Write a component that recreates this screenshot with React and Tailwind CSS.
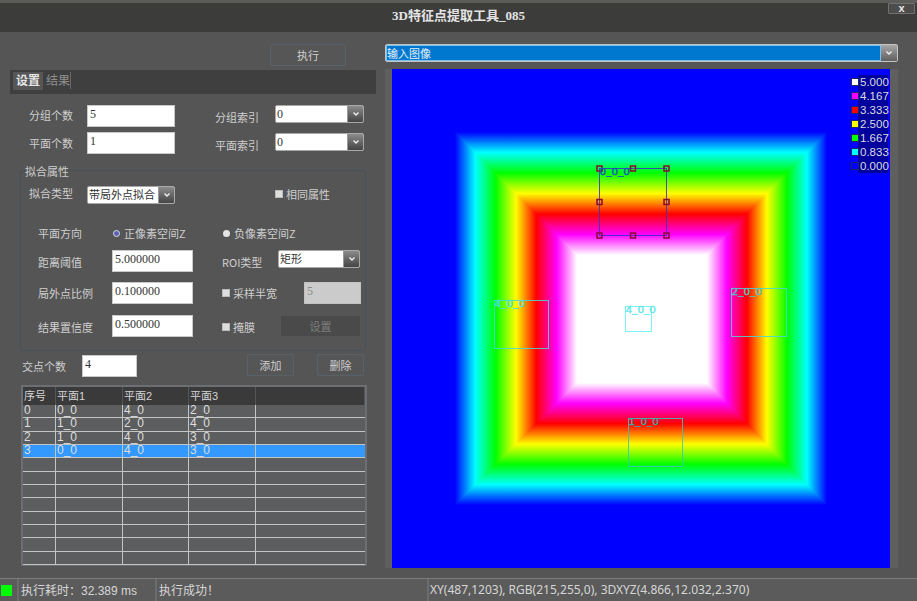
import React from "react";

const sans = "font-['Noto_Sans_CJK_SC','Liberation_Sans',sans-serif]";

function Chevron() {
  return (
    <svg width="8" height="6" viewBox="0 0 8 6" fill="none" stroke="#f0f0f0" strokeWidth="1.4">
      <path d="M1.5 1.5 L4 4 L6.5 1.5" />
    </svg>
  );
}

function Label({ w, top = 0, children }) {
  return (
    <span
      className="shrink-0 text-[11px] leading-[16px] text-[#cfcfcf] whitespace-nowrap"
      style={{ width: w, marginTop: top }}
    >
      {children}
    </span>
  );
}

function Input({ w, value, h = 22, disabled = false }) {
  return (
    <div
      className={`shrink-0 border px-[2px] pt-[1px] text-[12px] leading-[14px] font-['Liberation_Serif',serif] ${
        disabled ? "bg-[#cbcbcb] border-[#c2c2c2] text-[#8a8a8a]" : "bg-white border-[#c9c9c9] text-[#333333]"
      }`}
      style={{ width: w, height: h }}
    >
      {value}
    </div>
  );
}

function Combo({ w, value, cjk = false }) {
  return (
    <div
      className="shrink-0 h-[18px] flex bg-white border border-[#a8a8a8] rounded-[2px]"
      style={{ width: w }}
    >
      <span
        className={`flex-1 pl-[1px] text-[#333333] whitespace-nowrap overflow-hidden ${
          cjk ? "text-[11px] leading-[15px]" : "text-[12px] leading-[17px] font-['Liberation_Serif',serif]"
        }`}
      >
        {value}
      </span>
      <span className="w-[16px] flex items-center justify-center bg-gradient-to-b from-[#8c8c8c] to-[#454545] border-l border-[#9a9a9a] rounded-r-[1px]">
        <Chevron />
      </span>
    </div>
  );
}

function Check({ children, w }) {
  return (
    <span className="shrink-0 flex items-center gap-[3px]" style={{ width: w }}>
      <span className="w-[8px] h-[8px] bg-[#dedede] border border-[#bbbbbb]" />
      <span className="text-[11px] leading-[16px] text-[#cfcfcf] whitespace-nowrap">{children}</span>
    </span>
  );
}

function Radio({ on, children }) {
  return (
    <span className="flex items-center gap-[4px]">
      <span
        className={`w-[7px] h-[7px] rounded-full ${on ? "bg-[#5a60b8] border border-[#dddddd]" : "bg-[#e4e4e4]"}`}
      />
      <span className="text-[11px] leading-[16px] text-[#cfcfcf] whitespace-nowrap">{children}</span>
    </span>
  );
}

function Btn({ w, h = 22, children, cls = "" }) {
  return (
    <div
      className={`shrink-0 flex items-center justify-center text-[11px] rounded-[1px] border border-[#596066] bg-[#565656] text-[#cfcfcf] ${cls}`}
      style={{ width: w, height: h }}
    >
      {children}
    </div>
  );
}

const rows = [
  ["0", "0_0", "4_0", "2_0"],
  ["1", "1_0", "2_0", "4_0"],
  ["2", "1_0", "4_0", "3_0"],
  ["3", "0_0", "4_0", "3_0"],
  ...Array.from({ length: 8 }, () => ["", "", "", ""]),
];

const cols = "grid grid-cols-[33px_67px_66px_67px_1fr]";

function Table() {
  return (
    <div className="ml-[21px] mt-[8px] w-[346px] h-[181px] border-2 border-b-[1px] border-[#6c6e72] bg-[#5c5d5f]">
      <div className={`${cols} h-[18px] bg-[#3a3a3a] text-[11px] leading-[18px] text-[#d4d4d4]`}>
        {["序号", "平面1", "平面2", "平面3", ""].map((t, i) => (
          <div key={i} className="pl-[1px] border-r border-[#555555] font-['Liberation_Sans','Noto_Sans_CJK_SC',sans-serif]">
            {t}
          </div>
        ))}
      </div>
      {rows.map((r, i) => (
        <div
          key={i}
          className={`${cols} h-[13.33px] border-b border-[#c4c4c4] text-[12px] leading-[10px] text-[#dddddd] font-['Liberation_Sans',sans-serif] ${
            i === 3 ? "bg-[#3399ff]" : ""
          }`}
        >
          {[...r, ""].map((t, j) => (
            <div key={j} className={`pl-[1px] ${j < 4 ? "border-r border-[#c4c4c4]" : ""}`}>
              {t}
            </div>
          ))}
        </div>
      ))}
    </div>
  );
}

const stops = [
  ["0%", "#0000ff"],
  ["16.67%", "#00ffff"],
  ["33.33%", "#00ff00"],
  ["50%", "#ffff00"],
  ["66.67%", "#ff0000"],
  ["83.33%", "#ff00ff"],
  ["100%", "#ffffff"],
];

function Grad({ id, x1, y1, x2, y2 }) {
  return (
    <linearGradient id={id} gradientUnits="userSpaceOnUse" x1={x1} y1={y1} x2={x2} y2={y2}>
      {stops.map(([o, c]) => (
        <stop key={o} offset={o} stopColor={c} />
      ))}
    </linearGradient>
  );
}

const OX = 392;
const OY = 69;

function Frame({ x, y, w, h, label, color, textColor, big }) {
  const px = x - OX + 0.5;
  const py = y - OY + 0.5;
  const handles = big
    ? [0, 0.5, 1].flatMap((a) => [0, 0.5, 1].filter((b) => !(a === 0.5 && b === 0.5)).map((b) => [a, b]))
    : [];
  return (
    <g>
      <rect x={px} y={py} width={w} height={h} fill="none" stroke={color} strokeWidth="1" opacity="0.85" />
      {handles.map(([a, b], i) => (
        <rect
          key={i}
          x={px + a * w - 2.5}
          y={py + b * h - 2.5}
          width="5"
          height="5"
          fill="none"
          stroke="#8a0a30"
          strokeWidth="1.5"
        />
      ))}
      <text
        transform={`translate(${px} ${py + 6}) scale(1 0.8)`}
        fontSize="10.5"
        fontFamily="DejaVu Sans"
        fill={textColor}
        stroke={textColor}
        strokeWidth="0.4"
      >
        {label}
      </text>
    </g>
  );
}

function HeatMap() {
  return (
    <svg width="498" height="499" viewBox="0 0 498 499" className="block" shapeRendering="geometricPrecision">
      <defs>
        <Grad id="gt" x1="0" y1="63" x2="0" y2="186" />
        <Grad id="gb" x1="0" y1="436" x2="0" y2="314" />
        <Grad id="gl" x1="63" y1="0" x2="185" y2="0" />
        <Grad id="gr" x1="435" y1="0" x2="315" y2="0" />
      </defs>
      <rect width="498" height="499" fill="#0000ff" />
      <polygon points="63,63 435,63 315,186 185,186" fill="url(#gt)" shapeRendering="crispEdges" />
      <polygon points="63,436 435,436 315,314 185,314" fill="url(#gb)" shapeRendering="crispEdges" />
      <polygon points="63,63 185,186 185,314 63,436" fill="url(#gl)" shapeRendering="crispEdges" />
      <polygon points="435,63 315,186 315,314 435,436" fill="url(#gr)" shapeRendering="crispEdges" />
      <rect x="185" y="186" width="130" height="128" fill="#ffffff" />
      <Frame x={599} y={168} w={67} h={67} label="0_0_0" color="#3a30c8" textColor="#1850c8" big />
      <Frame x={494} y={300} w={54} h={48} label="4_0_0" color="#48d8d8" textColor="#48e0e0" />
      <Frame x={731} y={288} w={55} h={48} label="2_0_0" color="#48d8d8" textColor="#48c8c8" />
      <Frame x={625} y={306} w={26} h={25} label="4_0_0" color="#60f0f0" textColor="#60e8e8" />
      <Frame x={628} y={418} w={54} h={48} label="1_0_0" color="#38c8b8" textColor="#38a8a8" />
    </svg>
  );
}

const legend = [
  ["5.000", "bg-[#ffffff]"],
  ["4.167", "bg-[#ff00ff]"],
  ["3.333", "bg-[#ff0000]"],
  ["2.500", "bg-[#ffff00]"],
  ["1.667", "bg-[#00ff00]"],
  ["0.833", "bg-[#00ffff]"],
  ["0.000", "bg-[#0000ff]"],
];

function Legend() {
  return (
    <div className="absolute left-[466px] top-[6px] flex flex-col">
      {legend.map(([t, c]) => (
        <div key={t} className="flex h-[14px] items-center">
          <span className={`relative z-10 -mr-[1px] w-[8px] h-[8px] border border-[#222266] ${c}`} />
          <span className="w-[30px] h-[14px] pl-[2px] bg-[#00009c] text-[#dcdcdc] text-[11.5px] leading-[14px] font-['Liberation_Sans',sans-serif]">
            {t}
          </span>
        </div>
      ))}
    </div>
  );
}

export default function App() {
  return (
    <div className={`relative w-[917px] h-[601px] flex flex-col bg-[#555555] overflow-hidden ${sans}`}>
      <header className="h-[32px] shrink-0 border-t-[3px] border-[#5c5c58] bg-[#3c3d3b] flex items-center justify-center pb-[3px]">
        <h1 className="text-[13px] font-bold text-[#e4e4e4] font-['Liberation_Serif','Noto_Sans_CJK_SC',serif]">
          3D特征点提取工具_085
        </h1>
      </header>
      <div className="absolute left-[888px] top-[3px] w-[27px] h-[11px] bg-[#4c4d4b] border border-[#707070] rounded-[1px] flex items-center justify-center text-[11px] leading-[9px] font-bold text-[#e8e8e8] font-['Liberation_Sans',sans-serif]">
        x
      </div>

      <main className="flex-1 flex min-h-0">
        <section className="w-[385px] shrink-0 flex flex-col">
          <Btn w={76} cls="ml-[270px] mt-[12px]">执行</Btn>

          <div className="ml-[10px] mt-[4px] w-[366px] h-[24px] bg-[#3f3f3f] flex items-start pl-[3px] pt-[2px]">
            <span className="w-[30px] h-[18px] bg-[#565656] text-center text-[12px] font-bold leading-[16px] text-[#e6e6e6]">设置</span>
            <span className="ml-[3px] w-[25px] h-[17px] border-r border-[#666666] text-[12px] leading-[16px] text-[#8f8f8f]">结果</span>
          </div>

          <div className="ml-[29px] mt-[11px] flex items-start">
            <Label w={58} top={2}>分组个数</Label>
            <Input w={88} value="5" />
            <span className="w-[40px]" />
            <Label w={60} top={4}>分组索引</Label>
            <Combo w={89} value="0" />
          </div>
          <div className="ml-[29px] mt-[5px] flex items-start">
            <Label w={58} top={3}>平面个数</Label>
            <Input w={88} value="1" />
            <span className="w-[40px]" />
            <Label w={60} top={5}>平面索引</Label>
            <div className="mt-[1px]">
              <Combo w={89} value="0" />
            </div>
          </div>

          <fieldset className="relative ml-[20px] mt-[16px] w-[346px] h-[181px] border border-[#465058] rounded-[4px] flex flex-col">
            <span className="absolute left-[4px] -top-[8px] bg-[#555555] text-[11px] leading-[16px] text-[#cfcfcf]">拟合属性</span>

            <div className="flex items-start ml-[8px] mt-[15px]">
              <Label w={58} top={-1}>拟合类型</Label>
              <Combo w={88} value="带局外点拟合" cjk />
              <span className="w-[100px]" />
              <Check>相同属性</Check>
            </div>

            <div className="flex items-center ml-[17px] mt-[21px] h-[16px]">
              <Label w={75}>平面方向</Label>
              <span className="w-[110px]"><Radio on>正像素空间Z</Radio></span>
              <Radio>负像素空间Z</Radio>
            </div>

            <div className="flex items-start ml-[17px] mt-[9px]">
              <Label w={74} top={4}>距离阈值</Label>
              <Input w={81} value="5.000000" />
              <span className="w-[29px]" />
              <Label w={56} top={4}>ROI类型</Label>
              <Combo w={82} value="矩形" cjk />
            </div>

            <div className="flex items-start ml-[17px] mt-[10px]">
              <Label w={74} top={3}>局外点比例</Label>
              <Input w={81} value="0.100000" />
              <span className="w-[29px]" />
              <div className="mt-[3px]">
                <Check w={82}>采样半宽</Check>
              </div>
              <Input w={57} value="5" disabled />
            </div>

            <div className="flex items-start ml-[17px] mt-[11px]">
              <Label w={74} top={4}>结果置信度</Label>
              <Input w={81} value="0.500000" />
              <span className="w-[29px]" />
              <div className="mt-[4px]">
                <Check w={59}>掩膜</Check>
              </div>
              <div className="mt-[1px] w-[79px] h-[20px] bg-[#4a4a4a] flex items-center justify-center text-[11px] text-[#7e7e7e]">
                设置
              </div>
            </div>
          </fieldset>

          <div className="ml-[22px] mt-[4px] flex items-start">
            <Label w={60} top={3}>交点个数</Label>
            <Input w={55} value="4" />
            <span className="w-[110px]" />
            <div className="-mt-[1px] flex gap-[23px]">
              <Btn w={47}>添加</Btn>
              <Btn w={47}>删除</Btn>
            </div>
          </div>

          <Table />
        </section>

        <section className="w-[513px] shrink-0 flex flex-col">
          <div className="mt-[12px] h-[18px] flex border border-[#c4c4c4] rounded-[2px]">
            <span className="flex-1 bg-[#0078d0] border border-[#7cc0ee] text-[11px] leading-[14px] text-[#e8f2fa]">输入图像</span>
            <span className="w-[16px] flex items-center justify-center bg-gradient-to-b from-[#a8a8a8] to-[#606060]">
              <Chevron />
            </span>
          </div>
          <div className="relative mt-[7px] h-[499px] bg-[#5f5f5f] px-[7px]">
            <HeatMap />
            <Legend />
          </div>
        </section>
      </main>

      <footer className="h-[23px] shrink-0 border-t border-[#7c7c7c] bg-[#5b5b5b] flex items-center text-[12px] text-[#d6d6d6]">
        <span className="ml-[1px] w-[11px] h-[11px] bg-[#00ff00]" />
        <span className="ml-[5px] h-full w-[2px] bg-[#6c6c6c]" />
        <span className="w-[136px] pl-[2px] whitespace-nowrap">
          执行耗时：<span className="font-['Liberation_Sans',sans-serif]">32.389 ms</span>
        </span>
        <span className="h-full w-[2px] bg-[#6c6c6c]" />
        <span className="w-[270px] pl-[2px] whitespace-nowrap">执行成功！</span>
        <span className="h-full w-[2px] bg-[#6c6c6c]" />
        <span className="pl-[1px] whitespace-nowrap font-['Noto_Sans',sans-serif]">
          XY(487,1203), RGB(215,255,0), 3DXYZ(4.866,12.032,2.370)
        </span>
      </footer>
    </div>
  );
}
